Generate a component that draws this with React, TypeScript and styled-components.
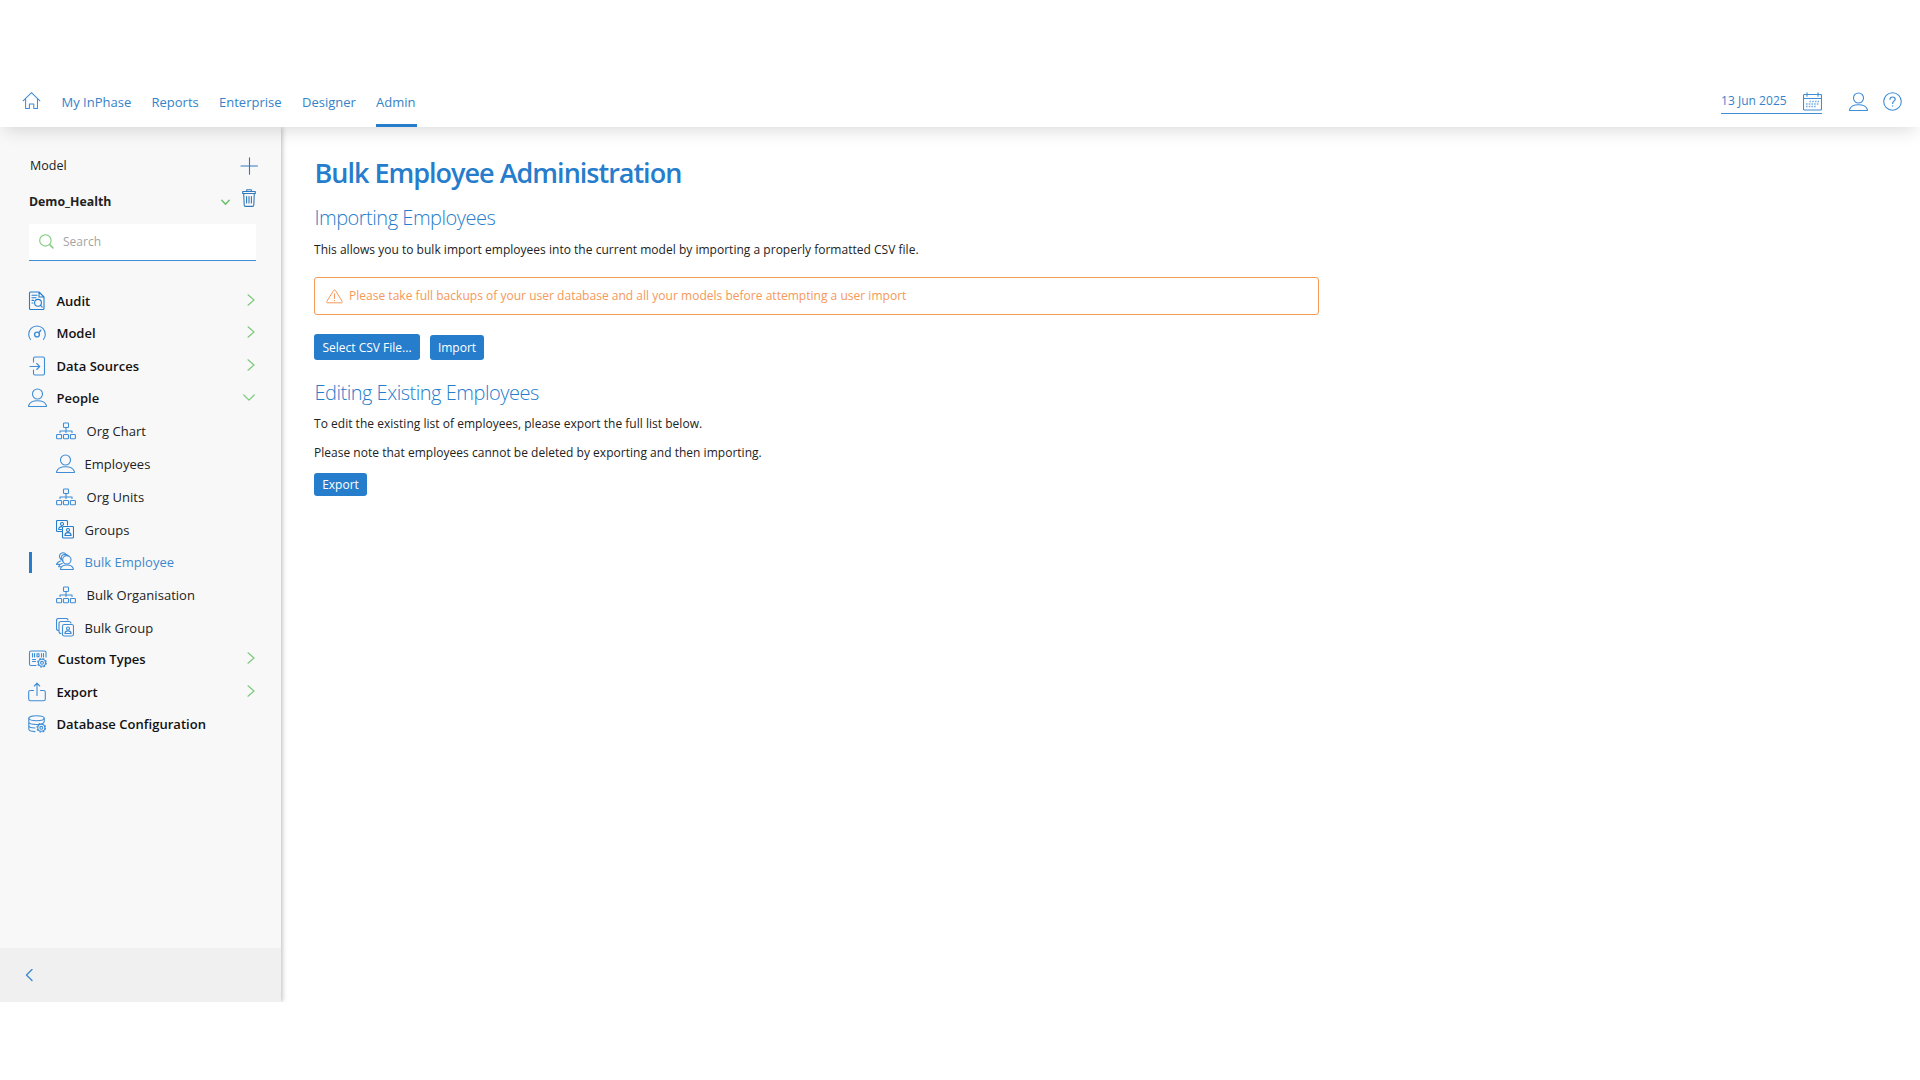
import React from "react";
import styled, { createGlobalStyle } from "styled-components";

const blue = "#267dcc";
const line = "#3f8dd6";
const green = "#7ccb7c";

const Global = createGlobalStyle`
  *, *::before, *::after { box-sizing: border-box; }
  body { margin: 0; background: #fff; font-family: "Open Sans", "Noto Sans", sans-serif; color: #222; overflow: hidden; }
  button, input { font-family: inherit; }
`;

const Page = styled.div`
  display: flex;
  flex-direction: column;
  height: 1080px;
  padding: 77px 0 78px;
`;

const Header = styled.header`
  position: relative;
  z-index: 2;
  flex: 0 0 50px;
  display: flex;
  align-items: stretch;
  justify-content: space-between;
  padding: 0 18px 0 22px;
  background: #fff;
  box-shadow: 0 8px 18px -5px rgba(0, 0, 0, 0.15);
  clip-path: inset(0 0 -40px 0);
`;

const Nav = styled.nav`
  display: flex;
  gap: 20.5px;
`;

const HomeLink = styled.a`
  display: flex;
  width: 19px;
  padding-top: 14px;
  height: 40px;
`;

const NavLink = styled.a<{ $w: number; $active?: boolean }>`
  width: ${(p) => p.$w}px;
  height: 50px;
  padding-top: 15px;
  font-size: 13px;
  line-height: 20px;
  letter-spacing: 0;
  color: #3682c8;
  white-space: nowrap;
  border-bottom: 3px solid ${(p) => (p.$active ? blue : "transparent")};
`;

const HeaderTools = styled.div`
  display: flex;
  align-items: flex-start;
  padding-top: 11px;
`;

const DateField = styled.div`
  display: flex;
  justify-content: space-between;
  width: 101px;
  height: 26px;
  margin-right: 27px;
  border-bottom: 1px solid ${line};
  font-size: 12px;
  line-height: 26px;
  letter-spacing: 0.03px;
  color: #3682c8;
  svg { margin-top: 4px; }
`;

const ToolButton = styled.a`
  display: flex;
  margin: 4px 0 0 0;
  & + & { margin-left: 15px; }
`;

const Body = styled.div`
  flex: 1;
  display: flex;
  min-height: 0;
`;

const Sidebar = styled.aside`
  flex: 0 0 281px;
  display: flex;
  flex-direction: column;
  background: #f8f8f8;
  box-shadow: 1px 0 5px rgba(0, 0, 0, 0.28);
  clip-path: inset(0 -14px 0 0);
`;

const SideHead = styled.div`
  display: flex;
  align-items: center;
  justify-content: space-between;
  height: 38px;
  margin-top: 20px;
  padding: 0 23px 0 30px;
  font-size: 12.5px;
  span { margin-top: -1px; }
`;

const ModelRow = styled.div`
  display: flex;
  align-items: center;
  height: 34px;
  padding: 0 25px 0 29px;
`;

const ModelName = styled.span`
  flex: 1;
  margin-top: -1px;
  font-size: 12.3px;
  font-weight: 700;
`;

const TrashSlot = styled.span`
  display: flex;
  margin: -8px 0 0 12px;
`;

const SearchBox = styled.label`
  display: flex;
  align-items: center;
  gap: 9px;
  width: 227px;
  height: 37px;
  margin: 5px 0 0 29px;
  padding: 0 10px 2px 10px;
  background: #fff;
  border-bottom: 1px solid ${line};
`;

const SearchInput = styled.input`
  width: 150px;
  padding: 0;
  border: 0;
  outline: 0;
  font-size: 12px;
  background: transparent;
  &::placeholder { color: #a4a4a4; opacity: 1; }
`;

const Menu = styled.ul`
  flex: 1;
  margin: 24px 0 0;
  padding: 0;
  list-style: none;
`;

const SubMenu = styled.ul`
  margin: 0 0 -0.7px;
  padding: 0;
  list-style: none;
`;

const MenuRow = styled.div`
  display: flex;
  align-items: center;
  height: 32.25px;
  padding: 0 26px 0 28px;
  font-size: 13px;
  font-weight: 600;
  color: #111;
  & > svg:last-child:not(:first-child) { margin-top: -2px; }
`;

const MenuLabel = styled.span<{ $gap?: number }>`
  flex: 1;
  margin-left: ${(p) => p.$gap ?? 10}px;
  letter-spacing: 0.03px;
  line-height: 18px;
  white-space: nowrap;
`;

const SubRow = styled.div<{ $active?: boolean }>`
  display: flex;
  align-items: center;
  height: ${(p) => (p.$active ? 32 : 33)}px;
  padding-top: ${(p) => (p.$active ? 0 : 1)}px;
  margin-left: 29px;
  font-size: 13px;
  color: ${(p) => (p.$active ? "#3f88cd" : "#222")};
  &::before {
    content: "";
    width: 3px;
    height: 21px;
    margin-right: 24px;
    background: ${(p) => (p.$active ? blue : "transparent")};
  }
  svg { margin-top: -1px; }
`;

const SideFoot = styled.div`
  flex: 0 0 54px;
  display: flex;
  align-items: center;
  padding-left: 25px;
  background: #f0f0f0;
`;

const Main = styled.main`
  flex: 1;
  padding: 25px 0 0 33px;
`;

const Title = styled.h1`
  margin: 0;
  padding-left: 0.5px;
  font-size: 27px;
  line-height: 41px;
  font-weight: 600;
  letter-spacing: -1px;
  color: ${blue};
`;

const Subtitle = styled.h2<{ $top: number }>`
  margin: ${(p) => p.$top}px 0 0;
  padding-left: 0.4px;
  font-size: 20px;
  line-height: 30px;
  font-weight: 300;
  letter-spacing: -0.48px;
  color: ${blue};
`;

const Text = styled.p<{ $top: number }>`
  margin: ${(p) => p.$top}px 0 0;
  font-size: 12px;
  line-height: 20px;
  letter-spacing: 0.02px;
  color: #222;
`;

const Alert = styled.div`
  display: flex;
  align-items: center;
  gap: 6px;
  width: 1005px;
  height: 38px;
  margin-top: 17px;
  padding: 0 0 0 11px;
  border: 1px solid #f79a55;
  border-radius: 3px;
  font-size: 12px;
  color: #f5985a;
`;

const AlertText = styled.span`
  margin-top: -2px;
  letter-spacing: 0.02px;
`;

const Actions = styled.div<{ $top: number }>`
  display: flex;
  align-items: flex-end;
  gap: 10px;
  margin-top: ${(p) => p.$top}px;
`;

const Button = styled.button<{ $w: number; $h: number }>`
  width: ${(p) => p.$w}px;
  height: ${(p) => p.$h}px;
  padding: 0;
  border: 0;
  border-radius: 3px;
  background: ${blue};
  color: #fff;
  font-size: 12px;
  white-space: nowrap;
`;

type IconProps = { w: number; h: number; color?: string; sw?: number; children: React.ReactNode };
const Icon = ({ w, h, color = line, sw = 1.1, children }: IconProps) => (
  <svg width={w} height={h} viewBox={`0 0 ${w} ${h}`} fill="none" stroke={color} strokeWidth={sw}
    strokeLinecap="round" strokeLinejoin="round">
    {children}
  </svg>
);

const Home = () => (
  <Icon w={20} h={20}><path d="M1.2 9.8 10 1.200l8.800 8.600M3.800 7.800v10h4V13.200h4.600v4.600h3.900v-10" /></Icon>
);
const Calendar = () => (
  <Icon w={19} h={19}>
    <rect x=".5" y="2.5" width="18" height="15.5" rx="1" />
    <path d="M.5 6.500h18M4 .8v3.400M15 .8v3.400" />
    <path d="M6.500 9.500h9.500M3 12h13M3 14.500h10" strokeDasharray="1.6 1.1" strokeLinecap="butt" strokeWidth="1.4" opacity=".7" />
  </Icon>
);
const Person = () => (
  <Icon w={19} h={20}>
    <circle cx="9.5" cy="6" r="5" />
    <path d="M1 18.500c-.6 0-.6-.5-.4-1 1-3 4.700-4.800 8.900-4.800s7.900 1.800 8.900 4.800c.2.500.2 1-.4 1z" />
  </Icon>
);
const Help = () => (
  <Icon w={19} h={19}>
    <circle cx="9.500" cy="9.500" r="8.800" />
    <path d="M7 7.300C7 5.800 8.100 5 9.600 5s2.600.900 2.600 2.200c0 1.900-2.600 2-2.600 4.200M9.600 13.800v.300" strokeWidth="1.200" />
  </Icon>
);
const Plus = () => (
  <Icon w={18} h={18} color="#3179bd"><path d="M9.500 .8v16.400M1 9h16.400" /></Icon>
);
const Trash = () => (
  <Icon w={14} h={18} color="#3179bd">
    <path d="M.7 4.500V2.500h12.600v2zM4.700 2.300V.700h4.600v1.600M1.700 4.800l.5 11.300c0 .8.500 1.300 1.300 1.300h7c.8 0 1.300-.5 1.300-1.300l.5-11.300M4.600 7.500v6.500M7 7.500v6.500M9.400 7.500v6.500" />
  </Icon>
);
const Search = () => (
  <Icon w={15} h={15} color={green}><circle cx="6.400" cy="6.400" r="5.700" /><path d="m10.800 10.800 3.200 3.200" strokeWidth="1.500" /></Icon>
);
const ChevRight = () => (
  <Icon w={8} h={12} color={green} sw={1.2}><path d="m1 .8 6 5.200-6 5.200" /></Icon>
);
const ChevDown = () => (
  <Icon w={12} h={8} color={green} sw={1.2}><path d="m.8 2 5.200 5.200L11.200 2" /></Icon>
);
const SmallDown = () => (
  <Icon w={9} h={7} color="#62bd62" sw={1.3}><path d="m.8 1.200 3.700 4 3.700-4" /></Icon>
);
const Collapse = () => (
  <Icon w={8} h={13} color="#3d8ad2" sw={1.4}><path d="M7 .500 1.500 6 7 11.500" /></Icon>
);
const Audit = () => (
  <Icon w={18} h={20} color={blue}>
    <path d="M11 1H2.500c-.600 0-1 .400-1 1v15.500c0 .600.400 1 1 1h12.500c.600 0 1-.400 1-1V6zM11 1v5h5M4 4.200h5M4 6.800h4M4 9.400h1.500M4 12h1" />
    <circle cx="10" cy="11.800" r="3.400" /><path d="m12.600 14.300 1.600 1.800" />
  </Icon>
);
const Gauge = () => (
  <Icon w={18} h={18}>
    <path d="M2.500 15.500A8.500 8.500 0 0 1 .700 10.500C.700 5.500 4.300 2 9 2s8.300 3.500 8.300 8.500a8.500 8.500 0 0 1-1.800 5" />
    <circle cx="9" cy="10.500" r="2.400" strokeWidth="1.400" /><path d="m10.800 8.700 2-2.400" strokeWidth="1.400" />
  </Icon>
);
const Input = () => (
  <Icon w={18} h={20}>
    <path d="M5.500 6V2.500c0-1 .5-1.500 1.500-1.500h8c1 0 1.500.500 1.500 1.500v15c0 1-.5 1.500-1.500 1.500H7c-1 0-1.500-.5-1.500-1.500V14M2 10.500h9.500M8.700 7.500l3 3-3 3" />
  </Icon>
);
const Org = () => (
  <Icon w={20} h={18}>
    <rect x="7.500" y="1" width="5" height="4.500" rx=".8" />
    <rect x=".6" y="12.500" width="5" height="4.300" rx=".8" />
    <rect x="7.500" y="12.500" width="5" height="4.300" rx=".8" />
    <rect x="14.400" y="12.500" width="5" height="4.300" rx=".8" />
    <path d="M10 5.500v5M4 10.500V9h12v1.500" />
  </Icon>
);
const Groups = () => (
  <Icon w={18} h={19} color={blue}>
    <path d="M6 11.500H1.500c-.6 0-1-.4-1-1v-9c0-.6.400-1 1-1h9c.6 0 1 .4 1 1V5" />
    <circle cx="6" cy="4" r="1.500" /><path d="M2.800 9.500v-1c.2-1.200 1.200-1.800 3-1.900M3 9.500h2.500" />
    <rect x="6.500" y="6.500" width="11" height="11.500" rx="1" />
    <circle cx="12" cy="10" r="1.500" /><path d="M8.900 15.500c.1-3.800 6.100-3.800 6.200 0z" />
  </Icon>
);
const Crowd = () => (
  <Icon w={18} h={19}>
    <circle cx="10.800" cy="7.800" r="4.200" />
    <path d="M4.800 17.500c-.4 0-.5-.3-.3-.8 1.600-5 11.100-5 12.900 0 .2.500 0 .8-.4.800zM7 9.200C4.500 7 4.600 3.600 7.700 2.600c1.700-.5 3.300 0 4.300 1M5.200 7.600C2.300 5.200 3.300 1.100 6.500.700c1.200-.1 2.200.2 3 .900M6.400 11.300c-2 .6-3.400 1.700-3.900 3.500h2.700M4.600 9C2.500 9.600 1 10.600.6 12.400h3" />
  </Icon>
);
const Stack = () => (
  <Icon w={18} h={19}>
    <path d="M2.500 12.500c-1.300 0-2-.7-2-2V2.500c0-1.300.7-2 2-2h7.500c1 0 1.700.5 2 1.500M5 15.500c-1.300 0-2-.7-2-2V5.500c0-1.300.7-2 2-2h8c1 0 1.700.5 2 1.500" />
    <rect x="6.500" y="6.500" width="11" height="11.500" rx="1.800" />
    <circle cx="12" cy="10.500" r="1.500" /><path d="M8.900 15.500h6.200c-.2-3.500-6-3.500-6.200 0z" />
  </Icon>
);
const Gear = ({ x, y }: { x: number; y: number }) => (
  <g transform={`translate(${x} ${y})`}>
    <circle r="4.300" strokeWidth="1.200" strokeDasharray="1.700 1.677" strokeLinecap="butt" />
    <circle r="3.500" /><circle r="1.400" />
  </g>
);
const Types = () => (
  <Icon w={19} h={18}>
    <path d="M8 15.500H3c-.9 0-1.500-.6-1.500-1.500V2.500C1.500 1.600 2.100 1 3 1h13.500c.9 0 1.500.6 1.500 1.500V7M4.500 3.500v3.500M6.500 3.500v3.500M9 3.800v3h2v-3zM13.500 3.500v3.500M15.500 3.500v3.500M4.500 9.500h3M4.500 11.500h3" />
    <Gear x={14} y={12.800} />
  </Icon>
);
const Share = () => (
  <Icon w={18} h={20}>
    <path d="M5.500 8.500H2.500C1.200 8.500.700 9 .700 10v7c0 1.200.600 1.800 1.800 1.800h13c1.200 0 1.800-.600 1.800-1.800v-7c0-1-.500-1.500-1.800-1.500h-3M9 13.500V1.200M6.300 4 9 1.200 11.700 4" />
  </Icon>
);
const Database = () => (
  <Icon w={18} h={18}>
    <ellipse cx="8.500" cy="3.300" rx="7.700" ry="2.500" />
    <path d="M.8 3.300v10.800c0 1.200 2.700 2.400 6.200 2.500M.8 7c0 1.400 3.200 2.500 7.700 2.500M.8 10.500c0 1.400 2.700 2.400 6.200 2.500M16.200 3.300v3.500c-.5 1.500-3 2.600-7.700 2.700" />
    <Gear x={13.3} y={12.800} />
  </Icon>
);
const Warning = () => (
  <Icon w={17} h={15} color="#f5985a" sw={1}>
    <path d="M7.700 1.300c.4-.7 1.200-.7 1.600 0l6.900 11.200c.4.700 0 1.300-.7 1.300h-14c-.7 0-1.100-.6-.7-1.300zM8.500 4.800v4.700M8.500 11.400v.4" />
  </Icon>
);

const employeesMenu = [
  { label: "Org Chart", icon: <Org />, gap: 10.5 },
  { label: "Employees", icon: <Person />, gap: 9.5 },
  { label: "Org Units", icon: <Org />, gap: 10.5 },
  { label: "Groups", icon: <Groups />, gap: 10.5 },
  { label: "Bulk Employee", icon: <Crowd />, gap: 10.5, active: true },
  { label: "Bulk Organisation", icon: <Org />, gap: 10.5 },
  { label: "Bulk Group", icon: <Stack />, gap: 10.5 },
];

type Item = { label: string; icon: React.ReactNode; gap?: number; open?: boolean; leaf?: boolean };
const menu: Item[] = [
  { label: "Audit", icon: <Audit />, gap: 10.4 },
  { label: "Model", icon: <Gauge />, gap: 10.4 },
  { label: "Data Sources", icon: <Input />, gap: 10.4 },
  { label: "People", icon: <Person />, gap: 9.4, open: true },
  { label: "Custom Types", icon: <Types />, gap: 10.4 },
  { label: "Export", icon: <Share />, gap: 10.4 },
  { label: "Database Configuration", icon: <Database />, gap: 10.4, leaf: true },
];

export default function App() {
  return (
    <>
      <Global />
      <Page>
        <Header>
          <Nav>
            <HomeLink><Home /></HomeLink>
            <NavLink $w={69.5}>My InPhase</NavLink>
            <NavLink $w={47}>Reports</NavLink>
            <NavLink $w={62.5}>Enterprise</NavLink>
            <NavLink $w={53.5}>Designer</NavLink>
            <NavLink $w={40.5} $active>Admin</NavLink>
          </Nav>
          <HeaderTools>
            <DateField><span>13 Jun 2025</span><Calendar /></DateField>
            <ToolButton><Person /></ToolButton>
            <ToolButton><Help /></ToolButton>
          </HeaderTools>
        </Header>
        <Body>
          <Sidebar>
            <SideHead><span>Model</span><Plus /></SideHead>
            <ModelRow>
              <ModelName>Demo_Health</ModelName>
              <SmallDown />
              <TrashSlot><Trash /></TrashSlot>
            </ModelRow>
            <SearchBox><Search /><SearchInput placeholder="Search" /></SearchBox>
            <Menu>
              {menu.map((m) => (
                <li key={m.label}>
                  <MenuRow>
                    {m.icon}
                    <MenuLabel $gap={m.gap}>{m.label}</MenuLabel>
                    {!m.leaf && (m.open ? <ChevDown /> : <ChevRight />)}
                  </MenuRow>
                  {m.open && (
                    <SubMenu>
                      {employeesMenu.map((s) => (
                        <li key={s.label}>
                          <SubRow $active={s.active}>{s.icon}<MenuLabel $gap={s.gap}>{s.label}</MenuLabel></SubRow>
                        </li>
                      ))}
                    </SubMenu>
                  )}
                </li>
              ))}
            </Menu>
            <SideFoot><Collapse /></SideFoot>
          </Sidebar>
          <Main>
            <Title>Bulk Employee Administration</Title>
            <Subtitle $top={10}>Importing Employees</Subtitle>
            <Text $top={7}>This allows you to bulk import employees into the current model by importing a properly formatted CSV file.</Text>
            <Alert><Warning /><AlertText>Please take full backups of your user database and all your models before attempting a user import</AlertText></Alert>
            <Actions $top={19}>
              <Button $w={106} $h={26}>Select CSV File...</Button>
              <Button $w={54} $h={25}>Import</Button>
            </Actions>
            <Subtitle $top={18}>Editing Existing Employees</Subtitle>
            <Text $top={6}>To edit the existing list of employees, please export the full list below.</Text>
            <Text $top={9}>Please note that employees cannot be deleted by exporting and then importing.</Text>
            <Actions $top={10}>
              <Button $w={53} $h={23}>Export</Button>
            </Actions>
          </Main>
        </Body>
      </Page>
    </>
  );
}
